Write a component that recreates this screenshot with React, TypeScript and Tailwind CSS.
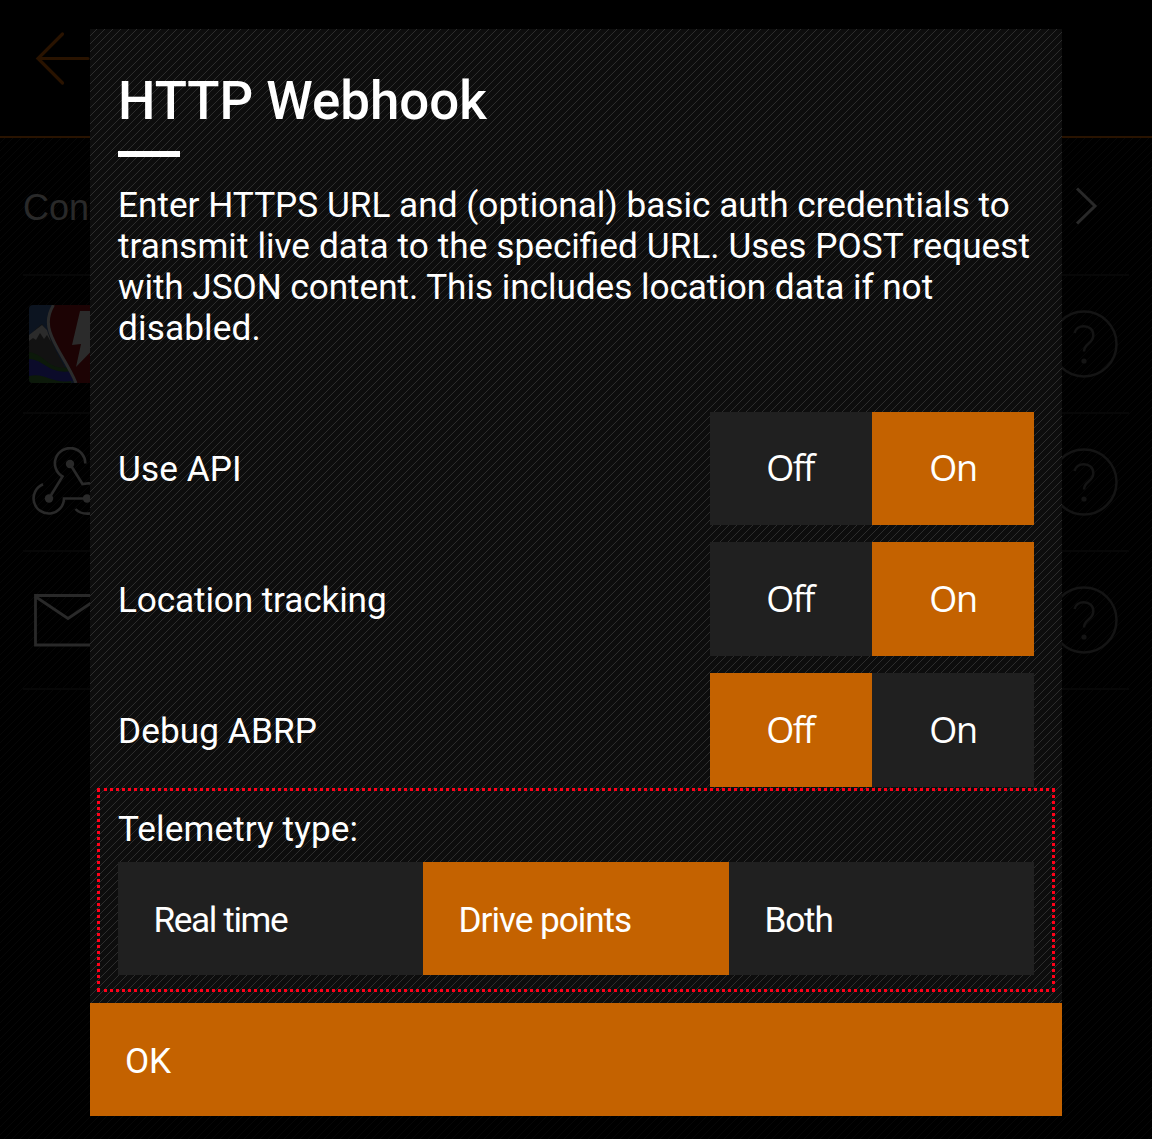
import React from "react";

type StripeProps = { id: string; color: string; phase: number };

function Stripes({ id, color, phase }: StripeProps) {
  return (
    <svg className="pointer-events-none absolute inset-0 h-full w-full" shapeRendering="crispEdges" aria-hidden="true">
      <defs>
        <pattern id={id} width="8" height="8" patternUnits="userSpaceOnUse">
          {[0, 1, 2, 3, 4, 5, 6, 7].map((y) => (
            <rect key={y} x={(phase - y + 8) % 8} y={y} width="1" height="1" fill={color} />
          ))}
        </pattern>
      </defs>
      <rect width="100%" height="100%" fill={`url(#${id})`} />
    </svg>
  );
}

function BackArrow() {
  return (
    <svg className="h-[56px] w-[60px]" viewBox="0 0 60 56" fill="none" stroke="#291300" strokeWidth="3.2" strokeLinecap="round">
      <path d="M27.5 4 3 28.500l24.500 24.500M3 28.500H53" />
    </svg>
  );
}

function Chevron() {
  return (
    <svg className="h-[40px] w-[24px]" viewBox="0 0 24 40" fill="none" stroke="#292929" strokeWidth="3">
      <path d="M2 2.500 20 20 2 37.500" />
    </svg>
  );
}

function HelpIcon() {
  return (
    <svg className="h-[70px] w-[70px]" viewBox="0 0 70 70" fill="none" stroke="#141414" strokeWidth="2.500">
      <circle cx="35" cy="35" r="32.500" />
      <path d="M25.500 24c1-4 4.700-6.800 9.300-6.800 5.600 0 9.500 3.700 9.500 9 0 8.500-9.300 8-9.300 16.300" />
      <circle cx="35" cy="52" r="2.600" fill="#141414" stroke="none" />
    </svg>
  );
}

function MapLogo() {
  return (
    <svg className="h-[78px] w-[78px] rounded-[4px]" viewBox="0 0 78 78">
      <rect width="78" height="78" fill="#0c1420" />
      <path d="M0 32 4 27l4-4 5-4 5 7 3 6 6 14 12 22v10H0z" fill="#121212" />
      <path d="M0 36V30l13-10 5 5 4 12-4-7-3 4-4-6-4 7-3-2z" fill="#2b2b2b" />
      <path d="M0 47c18 3 18 19 42 15v16H0z" fill="#0c190a" />
      <path d="M0 54c16 1 20 16 43 12l3 9c-22 6-28-8-46-4z" fill="#0b0b2a" />
      <path d="M25 0C20 8 18 16 21 27c5 16 17 30 27 51h30V0z" fill="#1c0304" />
      <path d="M24.500 0C19 9 18 18 21 27c5 16 17 30 26 51" fill="none" stroke="#2b2b2b" strokeWidth="3" />
      <path d="M51 6h22L66 32h10L47 62l5-23-9 1z" fill="#2b2b2b" />
    </svg>
  );
}

function WebhookIcon() {
  return (
    <svg className="h-[70px] w-[76px]" viewBox="0 0 76 70" fill="none" stroke="#292929" strokeWidth="2.600">
      <path d="M53.300 16.500A15.200 15.200 0 1 0 30.500 29.500L17 51.500" />
      <path d="M11 37.300A15.200 15.200 0 1 0 32 51.500h23" />
      <path d="M38 17 50.500 37l6-.8c8 0 15 6 16 14M43.500 62c5 6 20 7 27-2" />
      <g fill="#292929" stroke="none">
        <circle cx="38" cy="17" r="4.200" />
        <circle cx="17" cy="51.500" r="4.200" />
        <circle cx="55" cy="51.500" r="4.200" />
      </g>
    </svg>
  );
}

function MailIcon() {
  return (
    <svg className="h-[53px] w-[70px]" viewBox="0 0 70 53" fill="none" stroke="#292929" strokeWidth="2.800">
      <path d="M1.500 1.500h67v49.500h-67zM2 3l32 21.500L66 3" />
    </svg>
  );
}

function ServiceRow({ children }: { children: React.ReactNode }) {
  return (
    <div className="ml-[23px] mr-[23px] flex h-[138px] items-center justify-between border-b-2 border-[#070707] pr-[10px]">
      {children}
      <HelpIcon />
    </div>
  );
}

function Toggle({ label, on }: { label: React.ReactNode; on: boolean }) {
  return (
    <div className="flex items-stretch justify-between">
      <span className="self-center pt-[2px] text-[35.2px] leading-[41px]">{label}</span>
      <div className="grid w-[324px] grid-cols-2 font-['Open_Sans',sans-serif] text-[36px] leading-[48px] tracking-[-1.600px]">
        <button className={on ? "bg-[#202020] pb-px pr-[2px]" : "bg-[#c46200] pb-px pr-[2px]"}>Off</button>
        <button className={on ? "bg-[#c46200] pb-px tracking-[-1.200px]" : "bg-[#202020] pb-px tracking-[-1.200px]"}>On</button>
      </div>
    </div>
  );
}

export default function App() {
  return (
    <div className="relative h-[1139px] w-[1152px] overflow-hidden bg-black font-[Roboto,sans-serif] text-white">
      <header className="h-[138px] border-b-2 border-[#291300] pl-[35px] pt-[30px]">
        <BackArrow />
      </header>
      <main className="relative h-[1001px]">
        <Stripes id="page-stripes" color="#070707" phase={4} />
        <div className="relative">
          <div className="ml-[23px] mr-[23px] flex h-[138px] items-center justify-between border-b-2 border-[#070707] pr-[30px]">
            <span className="pt-[4px] font-['Liberation_Sans',sans-serif] text-[36px] text-[#292929]">Con</span>
            <Chevron />
          </div>
          <ServiceRow><div className="ml-[6px]"><MapLogo /></div></ServiceRow>
          <ServiceRow><div className="ml-[9px]"><WebhookIcon /></div></ServiceRow>
          <ServiceRow><div className="ml-[11px]"><MailIcon /></div></ServiceRow>
        </div>
      </main>

      <section role="dialog" className="absolute left-[90px] top-[29px] flex h-[1087px] w-[972px] flex-col bg-[#0d0d0d]">
        <Stripes id="dialog-stripes" color="#2d2d2d" phase={6} />
        <div className="relative flex-1 px-7 pt-[41px]">
          <h1 className="h-[62px] text-[52.8px] font-medium leading-[62px]">HTTP Webhook</h1>
          <div className="mt-[19px] h-[6px] w-[62px] bg-white" />
          <p className="mt-[28px] whitespace-nowrap text-[35.2px] leading-[41px]">
            Enter HTTPS URL and (optional) basic auth credentials to<br />
            <span className="[word-spacing:0.250px]">transmit live data to the specified URL. Uses POST request</span><br />
            <span className="tracking-[-0.060px]">with JSON content. This includes location data if not</span><br />
            <span className="tracking-[0.120px]">disabled.</span>
          </p>
          <div className="mt-[63px] grid h-[375px] grid-rows-[113px_114px_114px] gap-[17px]">
            <Toggle label={<span className="tracking-[0.080px]">Use API</span>} on />
            <Toggle label={<span className="tracking-[-0.130px]">Location tracking</span>} on />
            <Toggle label={<span className="tracking-[0.080px]">Debug ABRP</span>} on={false} />
          </div>
          <div className="-ml-[21px] mt-px h-[204px] w-[958px] border-[3px] border-dotted border-[#ff0019] px-[18px] pt-[18px]">
            <div className="h-[41px] text-[35.2px] leading-[41px] tracking-[0.080px]">Telemetry type:</div>
            <div className="mt-[12px] grid h-[113px] w-[916px] grid-cols-[305px_306px_305px] text-[35.2px] leading-[41px] tracking-[-1.200px] [word-spacing:-2px]">
              <button className="bg-[#202020] pl-[35.500px] pt-[4px] text-left tracking-[-1.400px]">Real time</button>
              <button className="bg-[#c46200] pl-[35.500px] pt-[4px] text-left tracking-[-1.050px]">Drive points</button>
              <button className="bg-[#202020] pl-[35.500px] pt-[4px] text-left">Both</button>
            </div>
          </div>
        </div>
        <button className="relative h-[113px] bg-[#c46200] pl-[35px] pt-[4px] text-left text-[35.2px] leading-[41px] tracking-[-0.200px]">OK</button>
      </section>
    </div>
  );
}
